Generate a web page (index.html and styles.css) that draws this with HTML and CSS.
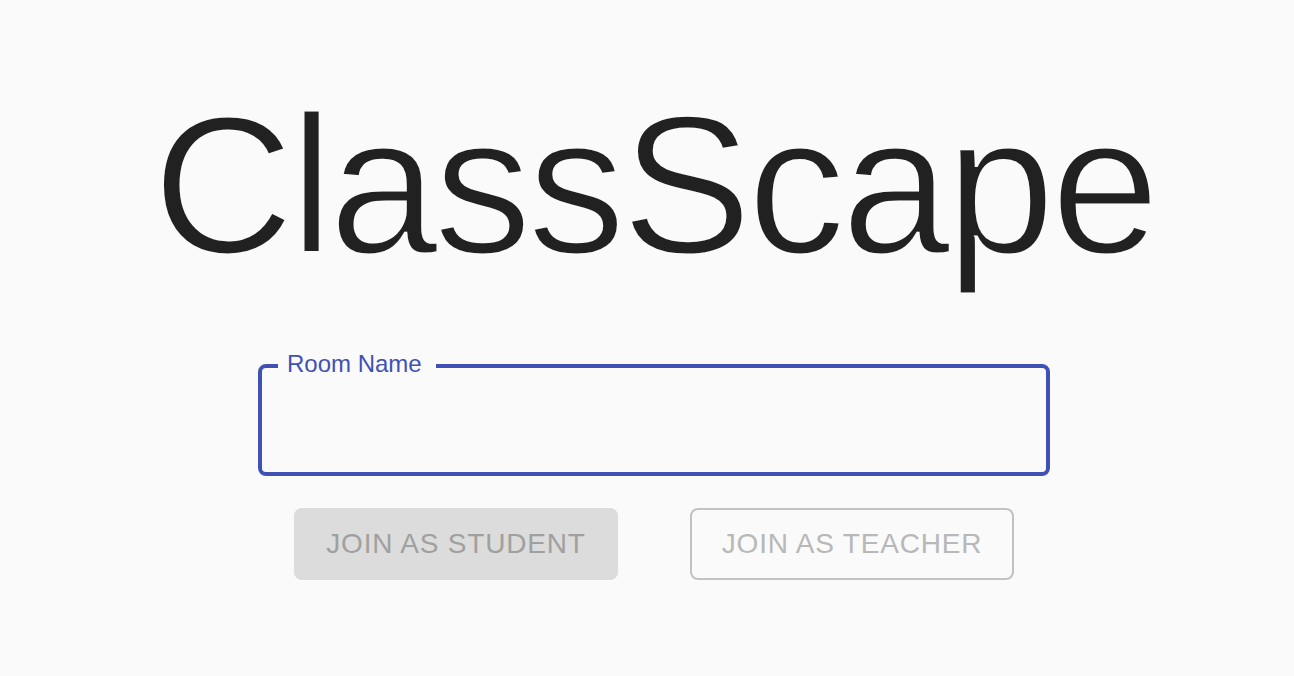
FILE: index.html
```html
<!DOCTYPE html>
<html>
<head>
<meta charset="utf-8">
<link rel="stylesheet" href="styles.css">
</head>
<body>
<main class="page">
  <h1 class="title">ClassScape</h1>
  <div class="field">
    <label class="field-label" for="room">Room Name</label>
    <input id="room" class="field-input" type="text">
  </div>
  <div class="actions">
    <button class="btn btn-contained" disabled>Join as Student</button>
    <button class="btn btn-outlined" disabled>Join as Teacher</button>
  </div>
</main>
</body>
</html>
```
FILE: styles.css
```css
html, body {
  margin: 0;
  padding: 0;
  background: #fafafa;
}
body {
  font-family: "Liberation Sans", Arial, Helvetica, sans-serif;
  height: 676px;
  overflow: hidden;
}
.page {
  display: flex;
  flex-direction: column;
  align-items: center;
  padding-top: 74px;
  margin-left: 14px;
}
.title {
  margin: 0;
  font-size: 196px;
  font-weight: 300;
  line-height: 224px;
  letter-spacing: -4.3px;
  color: #212121;
  -webkit-text-stroke: 3px #fafafa;
}
.field {
  position: relative;
  margin-top: 66px;
  width: 792px;
  height: 112px;
  box-sizing: border-box;
  border: 4px solid #3f51b5;
  border-radius: 8px;
}
.field-label {
  position: absolute;
  left: 16px;
  top: -16px;
  padding: 0 14px 0 9px;
  background: #fafafa;
  color: #3f51b5;
  font-size: 24px;
  line-height: 24px;
}
.field-input {
  width: 100%;
  height: 100%;
  box-sizing: border-box;
  border: 0;
  background: transparent;
  outline: none;
  font: inherit;
  font-size: 32px;
  padding: 0 28px;
}
.actions {
  display: flex;
  gap: 72px;
  margin-top: 32px;
}
.btn {
  width: 324px;
  height: 72px;
  box-sizing: border-box;
  display: flex;
  align-items: center;
  justify-content: center;
  font-family: "Liberation Sans", Arial, sans-serif;
  font-size: 28px;
  line-height: 1;
  letter-spacing: 0.8px;
  text-transform: uppercase;
  border-radius: 8px;
  padding: 0;
}
.btn-contained {
  background: #dcdcdc;
  border: 0;
  color: #a0a0a0;
}
.btn-outlined {
  background: transparent;
  border: 2px solid #c2c2c2;
  color: #b8b8b8;
}
```
